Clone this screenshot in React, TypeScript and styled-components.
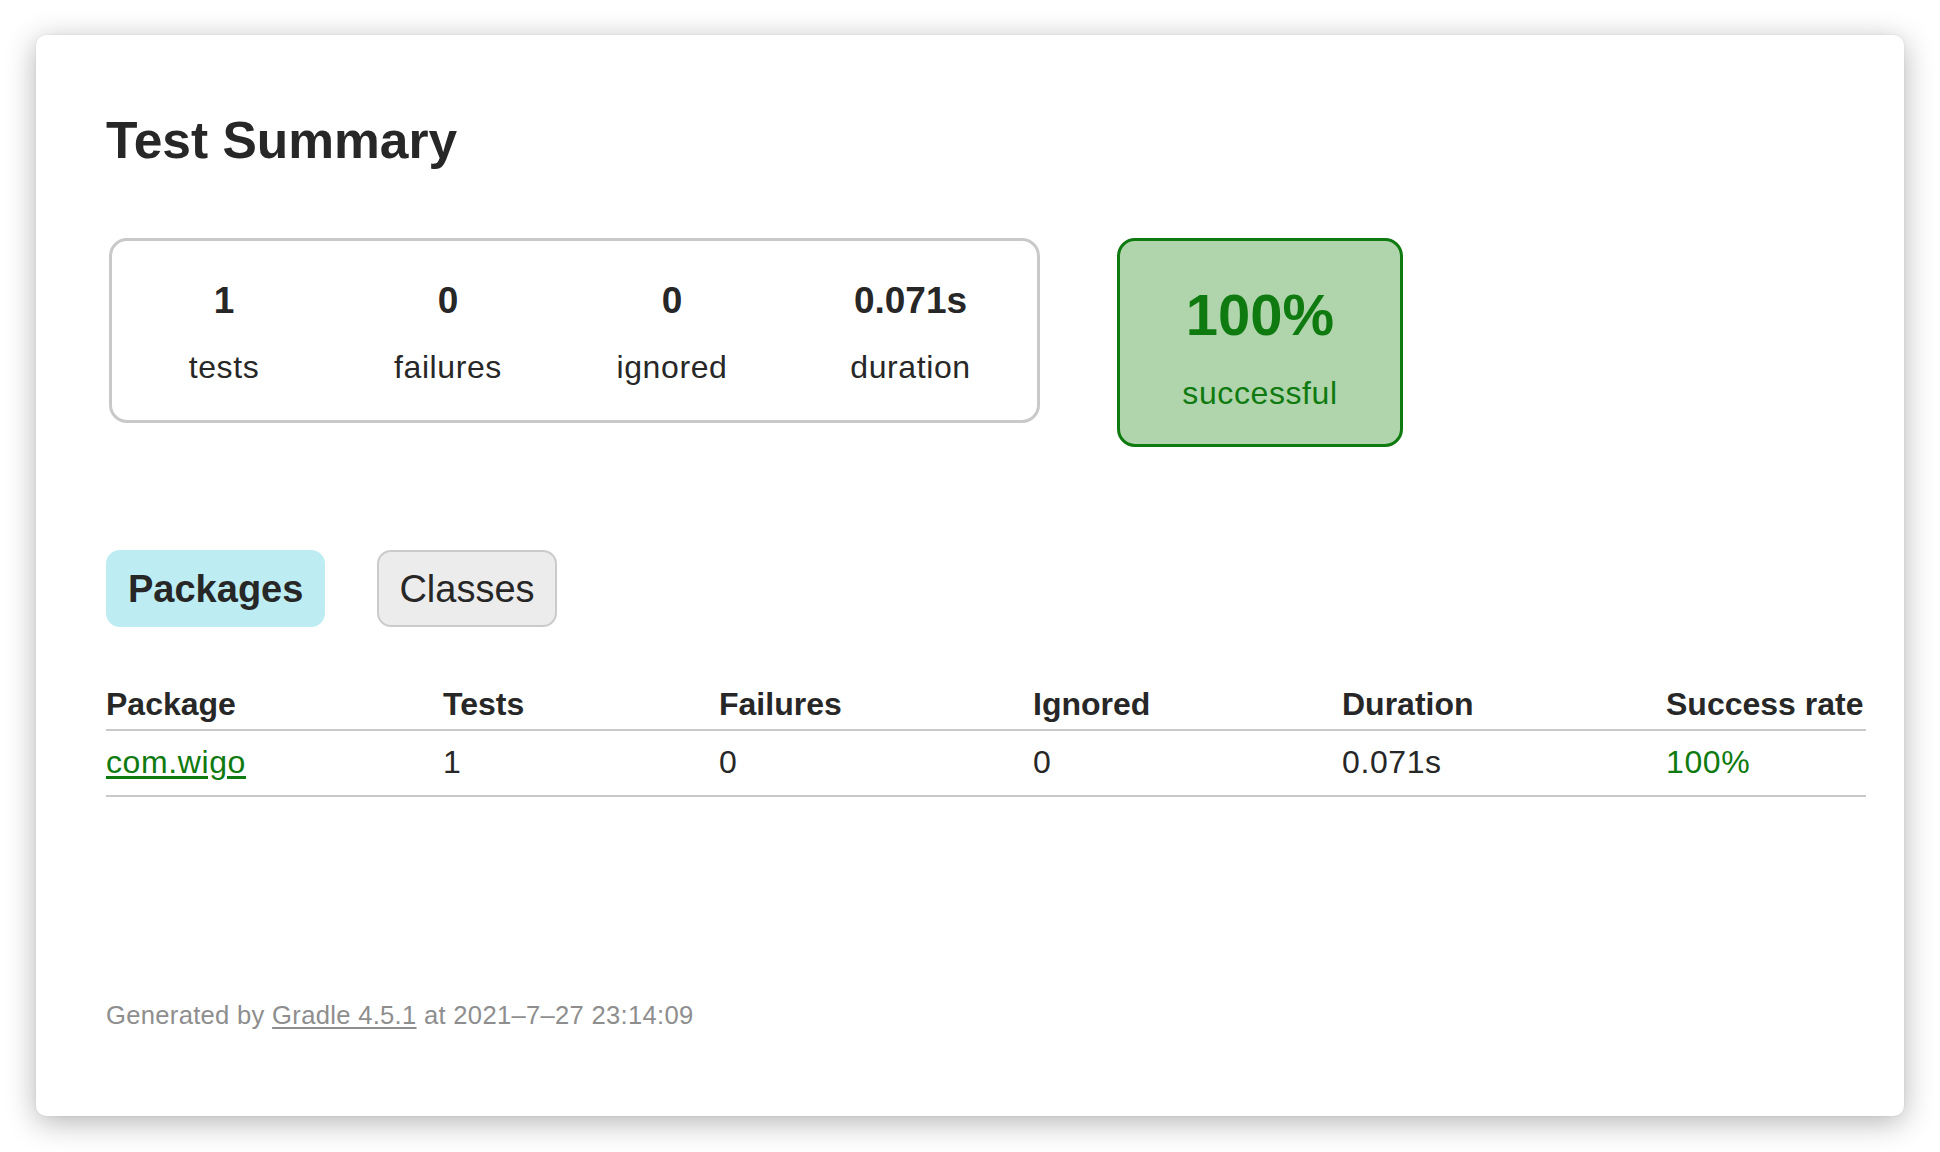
import styled, { createGlobalStyle } from "styled-components";

const GlobalStyle = createGlobalStyle`
  html, body {
    margin: 0;
    padding: 0;
    background: #ffffff;
  }
  body {
    font-family: "Liberation Sans", Arial, Helvetica, sans-serif;
    color: #272727;
  }
`;

const Page = styled.div`
  box-sizing: border-box;
  min-height: 1152px;
  padding: 35px 0 36px 36px;
  overflow: hidden;
`;

const Window = styled.div`
  box-sizing: border-box;
  width: 1868px;
  height: 1081px;
  background: #ffffff;
  border-radius: 10px;
  box-shadow: 0 6px 30px rgba(0, 0, 0, 0.3), 0 0 2px rgba(0, 0, 0, 0.1);
  padding: 76px 0 0 70px;
`;

const Title = styled.h1`
  margin: 0;
  font-size: 51.5px;
  line-height: 58px;
  font-weight: 700;
`;

const SummaryRow = styled.div`
  display: flex;
  align-items: flex-start;
  margin-top: 69px;
`;

const StatGroup = styled.div`
  box-sizing: border-box;
  display: grid;
  grid-template-columns: 224px 224px 224px 253px;
  width: 931px;
  height: 185px;
  margin-left: 3px;
  border: 3px solid #c9c9c9;
  border-radius: 18px;
`;

const InfoBox = styled.div`
  padding-top: 39px;
  text-align: center;
`;

const Counter = styled.div`
  font-size: 37px;
  line-height: 42px;
  font-weight: 700;
  margin-bottom: 27px;
`;

const Label = styled.div`
  font-size: 32px;
  line-height: 37px;
  letter-spacing: 0.6px;
`;

const SuccessBox = styled.div`
  box-sizing: border-box;
  width: 286px;
  height: 209px;
  margin-left: 77px;
  padding-top: 41px;
  border: 3px solid #0f7a0f;
  border-radius: 18px;
  background: #b0d5ad;
  color: #0f7a0f;
  text-align: center;
`;

const Percent = styled.div`
  font-size: 58px;
  line-height: 66px;
  font-weight: 700;
  margin-bottom: 27px;
`;

const Tabs = styled.ul`
  display: flex;
  gap: 52px;
  list-style: none;
  margin: 103px 0 0 0;
  padding: 0;
`;

const Tab = styled.li<{ $selected?: boolean }>`
  box-sizing: border-box;
  height: 77px;
  padding: 15px 20px 0;
  border: 2px solid ${(p) => (p.$selected ? "#bdecf2" : "#cbcbcb")};
  border-radius: 14px;
  background: ${(p) => (p.$selected ? "#bdecf2" : "#ececec")};
  font-size: 38px;
  line-height: 44px;
  font-weight: ${(p) => (p.$selected ? 700 : 400)};
  color: #272727;
`;

const Table = styled.div`
  margin-top: 59px;
  width: 1760px;
`;

const Row = styled.div<{ $head?: boolean }>`
  display: grid;
  grid-template-columns: 337px 276px 314px 309px 324px 200px;
  padding: ${(p) => (p.$head ? "0 0 6px" : "13px 0 14px")};
  border-bottom: 2px solid #c9c9c9;
  font-size: 32px;
  line-height: 37px;
  font-weight: ${(p) => (p.$head ? 700 : 400)};
  letter-spacing: ${(p) => (p.$head ? "0" : "0.6px")};
  white-space: nowrap;
`;

const Cell = styled.div<{ $success?: boolean }>`
  color: ${(p) => (p.$success ? "#0f7a0f" : "inherit")};
`;

const PackageLink = styled.a`
  color: #0f7a0f;
  text-decoration: underline;
  text-underline-offset: 3px;
`;

const Footer = styled.div`
  margin-top: 203px;
  font-size: 25.6px;
  line-height: 30px;
  letter-spacing: 0.3px;
  color: #8e8e8e;
  white-space: nowrap;

  a {
    color: #8e8e8e;
    text-decoration: underline;
    text-underline-offset: 3px;
  }
`;

const stats = [
  { value: "1", label: "tests" },
  { value: "0", label: "failures" },
  { value: "0", label: "ignored" },
  { value: "0.071s", label: "duration" },
];

const App = () => {
  return (
    <Page>
      <GlobalStyle />
      <Window>
        <Title>Test Summary</Title>
        <SummaryRow>
          <StatGroup>
            {stats.map((s) => (
              <InfoBox key={s.label}>
                <Counter>{s.value}</Counter>
                <Label>{s.label}</Label>
              </InfoBox>
            ))}
          </StatGroup>
          <SuccessBox>
            <Percent>100%</Percent>
            <Label>successful</Label>
          </SuccessBox>
        </SummaryRow>
        <Tabs>
          <Tab $selected>Packages</Tab>
          <Tab>Classes</Tab>
        </Tabs>
        <Table>
          <Row $head>
            <Cell>Package</Cell>
            <Cell>Tests</Cell>
            <Cell>Failures</Cell>
            <Cell>Ignored</Cell>
            <Cell>Duration</Cell>
            <Cell>Success rate</Cell>
          </Row>
          <Row>
            <Cell>
              <PackageLink href="#">com.wigo</PackageLink>
            </Cell>
            <Cell>1</Cell>
            <Cell>0</Cell>
            <Cell>0</Cell>
            <Cell>0.071s</Cell>
            <Cell $success>100%</Cell>
          </Row>
        </Table>
        <Footer>
          Generated by <a href="#">Gradle 4.5.1</a> at 2021–7–27 23:14:09
        </Footer>
      </Window>
    </Page>
  );
};

export default App;
